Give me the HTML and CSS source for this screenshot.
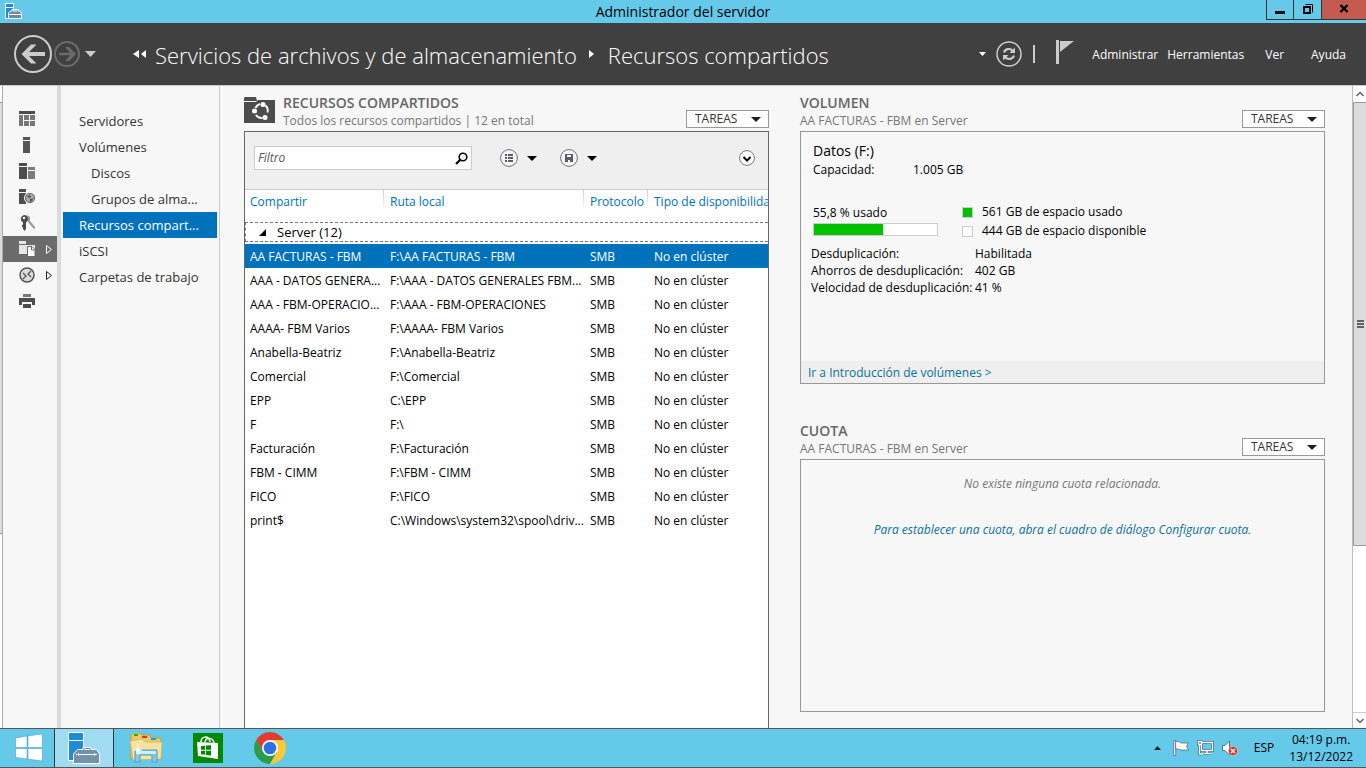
FILE: index.html
```html
<!DOCTYPE html>
<html lang="es">
<head>
<meta charset="utf-8">
<title>Administrador del servidor</title>
<link rel="stylesheet" href="styles.css">
</head>
<body>
<header class="titlebar">
  <svg class="app-icon" width="17" height="17" viewBox="0 0 17 17"><path d="M.5.5h8v15h-8z" fill="#1e8bd8" stroke="#fff"/><path d="M1 4.500h7" stroke="#fff"/><path d="M3.500 15.500V10l2-2H7V6.500h6V8h1.500l2 2v5.500z" fill="#6f8ba6" stroke="#fff"/><path d="M8 8h4M4 11.500h12" stroke="#fff"/></svg>
  <h1 class="titlebar-text">Administrador del servidor</h1>
  <div class="window-buttons">
    <button class="win-btn" aria-label="Minimizar"><svg width="10" height="12" viewBox="0 0 10 12"><path d="M0 8h10v3H0z"/></svg></button>
    <button class="win-btn" aria-label="Restaurar"><svg width="10" height="12" viewBox="0 0 10 12"><path d="M2.500 1.500h7v8" fill="none" stroke="#000"/><path d="M1 4h6v6H1z" fill="none" stroke="#000" stroke-width="2"/></svg></button>
    <button class="win-btn win-close" aria-label="Cerrar"><svg width="10" height="12" viewBox="0 0 10 12"><path d="M1.500 2l7 7M8.500 2l-7 7" stroke="#000" stroke-width="2.400"/></svg></button>
  </div>
</header>

<div class="topbar">
  <button class="plain" aria-label="Atrás"><svg width="38" height="38" viewBox="0 0 38 38" fill="none"><circle cx="19" cy="19" r="18" stroke="#ccc" stroke-width="2"/><path d="M10 19h21" stroke="#ccc" stroke-width="4"/><path d="M17 9.500h5.500L13 19l9.500 9.500H17L7.500 19z" fill="#ccc"/></svg></button>
  <button class="plain nav-forward" aria-label="Adelante"><svg width="26" height="26" viewBox="0 0 26 26" fill="none"><circle cx="13" cy="13" r="12" stroke="#6b6b6b" stroke-width="2"/><path d="M5 13h14" stroke="#6b6b6b" stroke-width="2.500"/><path d="M11 6h4l7 7-7 7h-4l6.500-7z" fill="#6b6b6b"/></svg></button>
  <button class="plain nav-history" aria-label="Historial"><svg width="11" height="6" viewBox="0 0 11 6"><path d="M0 0h11L5.500 6z" fill="#ccc"/></svg></button>
  <nav class="crumbs" aria-label="Ruta">
    <svg width="14" height="8" viewBox="0 0 14 8"><path d="M6 0v8L0 4zM13 0v8L8 4z" fill="#fff"/></svg>
    <a class="crumb" href="#archivos">Servicios de archivos y de almacenamiento</a>
    <svg class="crumb-arrow" width="5" height="8" viewBox="0 0 5 8"><path d="M0 0v8l5-4z" fill="#fff"/></svg>
    <a class="crumb" href="#recursos">Recursos compartidos</a>
  </nav>
  <div class="top-tools">
    <button class="plain" aria-label="Opciones"><svg width="7" height="4" viewBox="0 0 7 4"><path d="M0 0h7L3.500 4z" fill="#fff"/></svg></button>
    <button class="plain tool-refresh" aria-label="Actualizar"><svg width="26" height="26" viewBox="0 0 26 26" fill="none"><circle cx="13" cy="13" r="12" stroke="#ccc" stroke-width="1.500"/><path d="M8 11.500c1-3.500 6-5 9-1.500M18 14.500c-1 3.500-6 5-9 1.500" stroke="#ccc" stroke-width="2.200"/><path d="M19 6.500V12h-5.500zM7 19.500V14h5.500z" fill="#ccc"/></svg></button>
    <span class="tool-sep"></span>
    <button class="plain tool-flag" aria-label="Notificaciones"><svg width="18" height="24" viewBox="0 0 18 24"><path d="M0 0h3v24H0zM4 1h14L4 12z" fill="#ccc"/></svg></button>
    <button class="plain menu">Administrar</button>
    <button class="plain menu">Herramientas</button>
    <button class="plain menu menu-wide">Ver</button>
    <button class="plain menu">Ayuda</button>
  </div>
</div>

<div class="workspace">
  <div class="edge"><div class="edge-thumb"></div></div>
  <nav class="rail" aria-label="Roles">
    <a class="rail-item" href="#panel" aria-label="Panel"><svg width="16" height="16" viewBox="0 0 16 16"><path d="M0 0h16v3H0z" fill="#4d4d4d"/><path d="M0 4h4v11H0zM5 4h5v5H5zM11 4h5v5h-5zM5 10h5v5H5zM11 10h5v5h-5z" fill="#777"/></svg></a>
    <a class="rail-item" href="#local" aria-label="Servidor local"><svg width="16" height="16" viewBox="0 0 16 16"><path d="M4 0h7v3H4zM4 4h7v12H4z" fill="#555"/></svg></a>
    <a class="rail-item" href="#todos" aria-label="Todos los servidores"><svg width="16" height="16" viewBox="0 0 16 16"><path d="M0 0h8v3H0zM0 4h8v12H0z" fill="#4d4d4d"/><path d="M9 4h7v3H9zM9 8h7v8H9z" fill="#7c7c7c"/></svg></a>
    <a class="rail-item" href="#iis" aria-label="IIS"><svg width="16" height="16" viewBox="0 0 16 16"><path d="M0 0h7v3H0zM0 4h7v11H0z" fill="#4d4d4d"/><circle cx="11" cy="9" r="5.500" fill="#aaa" stroke="#f7f7f7"/><circle cx="11" cy="9" r="4.500" fill="none" stroke="#666"/><path d="M8 7l3-1 1 2-2 1zM11 10l3-1-1 3-2 1z" fill="#555"/></svg></a>
    <a class="rail-item" href="#claves" aria-label="Servicios de claves"><svg width="16" height="16" viewBox="0 0 16 16"><path d="M8 0l3 2v4l5 6v2l-2-1-5-6" fill="#999"/><path d="M5 0a4 4 0 0 1 2 7.500V14l-1.500 2L4 14v-2l-1 .5V10l1-.5v-2A4 4 0 0 1 5 0z" fill="#4d4d4d"/><circle cx="5" cy="3" r="1.200" fill="#f7f7f7"/></svg></a>
    <a class="rail-item rail-active" href="#archivos" aria-label="Servicios de archivos"><svg width="16" height="16" viewBox="0 0 16 16"><path d="M0 0h7v3H0zM0 4h16v9H0z" fill="#e6e6e6"/><path d="M8.500 5.500H13l3 3V15.500H8.500z" fill="#fff" stroke="#6b6b6b"/><path d="M12.500 5.500V9H16" fill="none" stroke="#6b6b6b"/></svg><svg class="rail-arrow" width="6" height="9" viewBox="0 0 6 9"><path d="M.5.5v8l5-4z" fill="none" stroke="#fff"/></svg></a>
    <a class="rail-item" href="#escritorio" aria-label="Servicios de Escritorio remoto"><svg width="16" height="16" viewBox="0 0 16 16" fill="none"><circle cx="8" cy="8" r="7" fill="#ddd" stroke="#555" stroke-width="1.500"/><path d="M4 6l3 3-3 3M12 4L9 7l3 3" stroke="#555" stroke-width="1.300"/></svg><svg class="rail-arrow" width="6" height="9" viewBox="0 0 6 9"><path d="M.5.5v8l5-4z" fill="none" stroke="#222"/></svg></a>
    <a class="rail-item" href="#impresion" aria-label="Servicios de impresión"><svg width="16" height="16" viewBox="0 0 16 16"><path d="M4 1h8v3H4z" fill="#777"/><path d="M0 5h16v7h-3V9H3v3H0zM4 11h8v4H4z" fill="#4d4d4d"/></svg></a>
  </nav>

  <nav class="sidenav" aria-label="Secciones">
    <a class="side-item" href="#servidores">Servidores</a>
    <a class="side-item" href="#volumenes">Volúmenes</a>
    <a class="side-item side-sub" href="#discos">Discos</a>
    <a class="side-item side-sub" href="#grupos">Grupos de alma...</a>
    <a class="side-item side-active" href="#recursos">Recursos compart...</a>
    <a class="side-item" href="#iscsi">iSCSI</a>
    <a class="side-item" href="#carpetas">Carpetas de trabajo</a>
  </nav>

  <main class="content">
    <section class="tile">
      <div class="tile-head">
        <svg class="tile-icon" width="31" height="26" viewBox="0 0 31 26"><path d="M1 0h11l1 4H0V1zM0 5h12l2-2h17v23H0z" fill="#4d4d4d"/><g fill="none" stroke="#fff" stroke-width="2"><path d="M11.500 11a7 7 0 0 1 4.500-4M21.500 8.500a7 7 0 0 1 2 7M18.500 21a7 7 0 0 1-6.500-3"/></g><g fill="#fff"><circle cx="19" cy="7.500" r="2.500"/><circle cx="10.500" cy="14" r="2.500"/><circle cx="21" cy="20.500" r="2.500"/></g></svg>
        <div class="tile-titles">
          <h2 class="tile-title">RECURSOS COMPARTIDOS</h2>
          <p class="tile-sub">Todos los recursos compartidos | 12 en total</p>
        </div>
        <button class="tasks">TAREAS <svg width="10" height="5" viewBox="0 0 10 5"><path d="M0 0h10L5 5z" fill="#1e1e1e"/></svg></button>
      </div>
      <div class="shares">
        <div class="toolbar">
          <div class="filter">
            <input class="filter-input" type="text" placeholder="Filtro" aria-label="Filtro">
            <button class="plain" aria-label="Buscar"><svg width="13" height="13" viewBox="0 0 13 13" fill="none" stroke="#000"><circle cx="8" cy="5" r="3.800" stroke-width="1.600"/><path d="M5.500 7.500L1 12" stroke-width="2.200"/></svg></button>
          </div>
          <button class="plain round-btn" aria-label="Criterios"><svg width="18" height="18" viewBox="0 0 18 18"><circle cx="9" cy="9" r="8.400" fill="#f7f7f7" stroke="#6e6e78"/><path d="M5 5h2v2H5zM8 5h5v2H8zM5 8h2v2H5zM8 8h5v2H8zM5 11h2v2H5zM8 11h5v2H8z" fill="#5b5b63"/></svg><svg width="10" height="5" viewBox="0 0 10 5"><path d="M0 0h10L5 5z"/></svg></button>
          <button class="plain round-btn" aria-label="Guardar consulta"><svg width="18" height="18" viewBox="0 0 18 18"><circle cx="9" cy="9" r="8.400" fill="#f7f7f7" stroke="#6e6e78"/><path d="M5 5h8v8H5z" fill="#5b5b63"/><path d="M7 6h4v2H7zM8 11h2v2H8z" fill="#f7f7f7"/></svg><svg width="10" height="5" viewBox="0 0 10 5"><path d="M0 0h10L5 5z"/></svg></button>
          <button class="plain expand" aria-label="Expandir"><svg width="16" height="16" viewBox="0 0 16 16" fill="none"><circle cx="8" cy="8" r="7.400" fill="#fff" stroke="#777"/><path d="M4.500 7L8 10.500 11.500 7" stroke="#000" stroke-width="2"/></svg></button>
        </div>
        <table class="grid">
          <colgroup><col class="c-name"><col class="c-path"><col class="c-proto"><col></colgroup>
          <thead><tr><th>Compartir</th><th>Ruta local</th><th>Protocolo</th><th>Tipo de disponibilidad</th></tr></thead>
          <tbody>
            <tr class="group"><td colspan="4"><div class="group-box"><svg width="8" height="7" viewBox="0 0 8 7"><path d="M7 0v7H0z"/></svg>Server (12)</div></td></tr>
            <tr class="selected"><td>AA FACTURAS - FBM</td><td>F:\AA FACTURAS - FBM</td><td>SMB</td><td>No en clúster</td></tr>
            <tr><td>AAA - DATOS GENERA...</td><td>F:\AAA - DATOS GENERALES FBM...</td><td>SMB</td><td>No en clúster</td></tr>
            <tr><td>AAA - FBM-OPERACIO...</td><td>F:\AAA - FBM-OPERACIONES</td><td>SMB</td><td>No en clúster</td></tr>
            <tr><td>AAAA- FBM Varios</td><td>F:\AAAA- FBM Varios</td><td>SMB</td><td>No en clúster</td></tr>
            <tr><td>Anabella-Beatriz</td><td>F:\Anabella-Beatriz</td><td>SMB</td><td>No en clúster</td></tr>
            <tr><td>Comercial</td><td>F:\Comercial</td><td>SMB</td><td>No en clúster</td></tr>
            <tr><td>EPP</td><td>C:\EPP</td><td>SMB</td><td>No en clúster</td></tr>
            <tr><td>F</td><td>F:\</td><td>SMB</td><td>No en clúster</td></tr>
            <tr><td>Facturación</td><td>F:\Facturación</td><td>SMB</td><td>No en clúster</td></tr>
            <tr><td>FBM - CIMM</td><td>F:\FBM - CIMM</td><td>SMB</td><td>No en clúster</td></tr>
            <tr><td>FICO</td><td>F:\FICO</td><td>SMB</td><td>No en clúster</td></tr>
            <tr><td>print$</td><td>C:\Windows\system32\spool\driv...</td><td>SMB</td><td>No en clúster</td></tr>
          </tbody>
        </table>
      </div>
    </section>

    <div class="side-tiles">
      <section class="tile">
        <div class="tile-head">
          <div class="tile-titles">
            <h2 class="tile-title">VOLUMEN</h2>
            <p class="tile-sub">AA FACTURAS - FBM en Server</p>
          </div>
          <button class="tasks">TAREAS <svg width="10" height="5" viewBox="0 0 10 5"><path d="M0 0h10L5 5z" fill="#1e1e1e"/></svg></button>
        </div>
        <div class="box">
          <div class="volume">
            <h3 class="volume-name">Datos (F:)</h3>
            <p class="capacity"><span>Capacidad:</span><span>1.005 GB</span></p>
            <div class="usage">
              <div>
                <p class="usage-text">55,8 % usado</p>
                <div class="bar" role="img" aria-label="55,8 % usado"><div class="bar-fill" style="width:56%"></div></div>
              </div>
              <ul class="legend">
                <li><i class="swatch swatch-used"></i>561 GB de espacio usado</li>
                <li><i class="swatch"></i>444 GB de espacio disponible</li>
              </ul>
            </div>
            <dl class="dedup">
              <dt>Desduplicación:</dt><dd>Habilitada</dd>
              <dt>Ahorros de desduplicación:</dt><dd>402 GB</dd>
              <dt>Velocidad de desduplicación:</dt><dd>41 %</dd>
            </dl>
          </div>
          <div class="box-foot"><a class="link" href="#volumenes">Ir a Introducción de volúmenes &gt;</a></div>
        </div>
      </section>
      <section class="tile">
        <div class="tile-head">
          <div class="tile-titles">
            <h2 class="tile-title">CUOTA</h2>
            <p class="tile-sub">AA FACTURAS - FBM en Server</p>
          </div>
          <button class="tasks">TAREAS <svg width="10" height="5" viewBox="0 0 10 5"><path d="M0 0h10L5 5z" fill="#1e1e1e"/></svg></button>
        </div>
        <div class="box quota">
          <p class="quota-empty">No existe ninguna cuota relacionada.</p>
          <a class="link" href="#cuota">Para establecer una cuota, abra el cuadro de diálogo Configurar cuota.</a>
        </div>
      </section>
    </div>
  </main>

  <div class="scrollbar">
    <button class="plain scroll-btn" aria-label="Subir"><svg width="8" height="6" viewBox="0 0 8 6"><path d="M.5 5L4 1.500 7.500 5" fill="none" stroke="#606060" stroke-width="1.500"/></svg></button>
    <div class="thumb"><i></i><i></i><i></i></div>
    <div class="track"></div>
    <button class="plain scroll-btn scroll-down" aria-label="Bajar"><svg width="8" height="6" viewBox="0 0 8 6"><path d="M.5 1L4 4.500 7.500 1" fill="none" stroke="#606060" stroke-width="1.500"/></svg></button>
  </div>
</div>

<footer class="taskbar">
  <button class="task" aria-label="Inicio"><svg width="28" height="28" viewBox="0 0 28 28" fill="#fff" stroke="#4a9fc4" stroke-width=".6"><path d="M.5 4L12 2v11.500H.5zM13 1.800L27.500 0v13.500H13zM.5 14.500H12V25L.5 23.500zM13 14.500h14.500V27L13 25.200z"/></svg></button>
  <button class="task task-active" aria-label="Administrador del servidor"><svg width="32" height="32" viewBox="0 0 32 32" stroke="#fff"><path d="M.5.500h15v28H.5z" fill="#1e8bd8"/><path d="M1 8.500h14"/><path d="M5.500 31.500V22l4-4.500H15V15.500h8v2h5.500l3 4.500v9.500z" fill="#7391ab"/><path d="M16 17.500h6M8 22.500h21M10.500 21v3M26.500 21v3"/></svg></button>
  <button class="task" aria-label="Explorador de archivos"><svg width="32" height="30" viewBox="0 0 32 30"><path d="M1 2l2-2h7l2 2h8l1 3h9l1 2v19H1z" fill="#ecc968" stroke="#c69b3c"/><path d="M4 1h4v2H4z" fill="#19b51d"/><path d="M12 3h5v2h-5z" fill="#d33a2c"/><path d="M21 5h5v2h-5z" fill="#2b96e5"/><path d="M0 8l12-2 3 3h17l-1 17-28 1z" fill="#f7e3a0" stroke="#d7ad50" stroke-width=".7"/><path d="M5 29V17h22v12h-5v-7H10v7z" fill="#83c6e8" stroke="#4f9fc7"/><path d="M6 18h20v3H6z" fill="#d1eefa"/><path d="M8 11l1 5 4 1-4 1-1 5-1-5-4-1 4-1z" fill="#fff"/></svg></button>
  <button class="task" aria-label="Tienda"><svg width="30" height="30" viewBox="0 0 30 30"><path d="M0 0h30v30H0z" fill="#008a00"/><path d="M4 9l21 1v16L5 23z" fill="#fff"/><path d="M8 9c0-6 8-7 9 0M12 9c1-5 8-5 9 1" fill="none" stroke="#fff" stroke-width="1.500"/><path d="M8 13l4-.3v4H8zM13 12.600l5-.4v4.600h-5zM8 17.700h4v4l-4-.5zM13 17.700h5v4.800l-5-.6z" fill="#008a00"/></svg></button>
  <button class="task" aria-label="Chrome"><svg width="32" height="32" viewBox="0 0 32 32"><path d="M2.150 8A16 16 0 0 1 29.850 8H16l-7 12z" fill="#e33b2e"/><path d="M2.150 8A16 16 0 0 0 16 32l7-12-7-4-7 4z" fill="#2a9d48"/><path d="M29.850 8A16 16 0 0 1 16 32l7-12-7-12z" fill="#fcc934"/><circle cx="16" cy="16" r="8" fill="#fff"/><circle cx="16" cy="16" r="6.300" fill="#2d6fe4"/></svg></button>
  <div class="tray">
    <button class="plain" aria-label="Mostrar iconos ocultos"><svg width="7" height="4" viewBox="0 0 7 4"><path d="M0 4h7L3.500 0z" fill="#222"/></svg></button>
    <svg class="tray-flag" width="16" height="16" viewBox="0 0 16 16"><path d="M.7.500h2v15h-2z" fill="#fff" stroke="#4a5a63" stroke-width=".7"/><path d="M2.700 1.500c4-1 4 2 6.500 1.500h6.300l-2 3 2 4H9c-3 0-3-1.500-6.300-1z" fill="#fff" stroke="#4a5a63" stroke-width=".7"/></svg>
    <svg width="17" height="16" viewBox="0 0 17 16" fill="none"><path d="M4.500 2.500h11v8h-11zM7 13.500h7M10 11v2M2.500 5v9H6M1.500 1.500h3v3h-3z" stroke="#34505d" stroke-width="2.600"/><path d="M4.500 2.500h11v8h-11zM7 13.500h7M10 11v2M2.500 5v9H6M1.500 1.500h3v3h-3z" stroke="#fff" stroke-width="1.400"/></svg>
    <svg width="16" height="16" viewBox="0 0 16 16"><path d="M.5 5.500h2.500L7.500 1v14L3 10.500H.5z" fill="#fff" stroke="#4a5a63" stroke-width=".8"/><circle cx="11" cy="11" r="4.700" fill="#d8352c" stroke="#fff" stroke-width=".5"/><path d="M9 9l4 4M13 9l-4 4" stroke="#fff" stroke-width="1.500"/></svg>
    <span class="lang">ESP</span>
    <div class="clock"><time>04:19 p.m.</time><time>13/12/2022</time></div>
  </div>
</footer>
</body>
</html>
```
FILE: styles.css
```css
* { box-sizing: border-box; }
body {
  margin: 0;
  height: 100vh;
  display: flex;
  flex-direction: column;
  overflow: hidden;
  background: #f7f7f7;
  color: #000;
  font: 12px/16px "Open Sans", "Noto Sans", sans-serif;
}
h1, h2, h3, p, ul, dl, dd { margin: 0; padding: 0; }
ul { list-style: none; }
a { text-decoration: none; color: inherit; }
svg { display: block; flex: none; }
button, input { font: inherit; color: inherit; }
.plain { background: none; border: 0; padding: 0; flex: none; }

.titlebar {
  flex: none;
  height: 23px;
  display: grid;
  grid-template-columns: 100px 1fr 100px;
  background: #65c9ea;
}
.app-icon { margin: 3px 0 0 5px; }
.titlebar-text { text-align: center; font-size: 14px; line-height: 23px; font-weight: 400; }
.window-buttons { display: flex; justify-content: flex-end; height: 20px; }
.win-btn {
  width: 28px;
  padding: 0 0 1px;
  display: grid;
  place-items: center;
  background: none;
  border: 1px solid #333;
  border-width: 0 0 1px 1px;
}
.win-close { width: 46px; background: #c35b50; }

.topbar {
  flex: none;
  height: 62px;
  display: flex;
  align-items: center;
  padding-left: 14px;
  background: #404040;
  color: #fff;
}
.nav-forward { margin-left: 2px; }
.nav-history { margin-left: 5px; }
.crumbs { display: flex; align-items: center; margin-left: 37px; white-space: nowrap; }
.crumb { font-size: 22px; line-height: 32px; font-weight: 300; margin-left: 8px; padding-top: 2px; }
.crumb-arrow { margin: 0 6px 0 12px; }
.top-tools { margin-left: auto; display: flex; align-items: center; padding-right: 20px; }
.tool-refresh { margin-left: 10px; }
.tool-sep { width: 2px; height: 18px; margin-left: 11px; background: #ccc; }
.tool-flag { margin: 0 18px 4px 21px; }
.menu { padding-top: 2px; }
.menu + .menu { margin-left: 9px; }
.menu + .menu-wide { margin: 0 18px 0 21px; }

.workspace { flex: 1; min-height: 0; display: flex; border-top: 1px solid #c8c8c8; }
.edge { width: 3px; padding-top: 16px; background: #fff; border-right: 1px solid #aaa; }
.edge-thumb { height: 69%; background: #dcdcdc; border: 1px solid #999; border-width: 1px 0; }
.rail { width: 58px; padding-top: 20px; border-right: 4px solid #dadada; }
.rail-item { display: flex; align-items: center; height: 26px; padding-left: 16px; }
.rail-active { background: #6b6b6b; }
.rail-arrow { margin-left: 11px; }

.sidenav { width: 159px; padding: 22px 2px 0; border-right: 1px solid #ccc; color: #333; }
.side-item { display: block; height: 26px; padding-left: 16px; font-size: 13px; line-height: 27px; white-space: nowrap; }
.side-sub { padding-left: 28px; }
.side-active { background: #0072bc; color: #fff; }

.content {
  flex: 1;
  min-width: 0;
  display: grid;
  grid-template-columns: minmax(0, 1fr) minmax(0, 1fr);
  gap: 31px;
  padding: 9px 27px 0 24px;
}
.tile { display: flex; flex-direction: column; min-height: 0; }
.tile-head { display: flex; height: 36px; flex: none; }
.tile-icon { margin: 2px 8px 0 0; }
.tile-title { font-size: 14px; line-height: 16px; font-weight: 600; color: #666; }
.tile-sub { font-size: 12px; line-height: 16px; margin-top: 2px; color: #767676; }
.tasks {
  align-self: flex-end;
  margin: 0 0 3px auto;
  width: 83px;
  height: 18px;
  padding: 0 7px 0 8px;
  display: flex;
  align-items: center;
  justify-content: space-between;
  background: #fff;
  border: 1px solid #999;
  color: #333;
}

.shares { flex: 1; min-height: 0; overflow: hidden; background: #fff; border: 1px solid #666; border-bottom: 0; }
.toolbar {
  height: 58px;
  display: flex;
  align-items: center;
  padding: 0 13px 5px 9px;
  background: #efefef;
  border-bottom: 1px solid #ccc;
}
.filter { width: 218px; height: 24px; display: flex; align-items: center; padding: 0 3px; background: #fff; border: 1px solid #ccc; }
.filter-input { flex: 1; min-width: 0; border: 0; padding: 0; outline: 0; background: none; }
.filter-input::placeholder { color: #555; font-style: italic; opacity: 1; }
.round-btn { display: flex; align-items: center; gap: 9px; margin-left: 28px; }
.round-btn + .round-btn { margin-left: 23px; }
.expand { margin-left: auto; }

.grid { width: 100%; table-layout: fixed; border-collapse: collapse; }
.c-name { width: 139px; }
.c-path { width: 200px; }
.c-proto { width: 64px; }
.grid th, .grid td { padding: 0 0 0 6px; text-align: left; font-weight: 400; white-space: nowrap; overflow: hidden; }
.grid th:first-child, .grid td:first-child { padding-left: 5px; }
.grid th { height: 32px; color: #0072bc; vertical-align: top; padding-top: 4px; }
.grid th:not(:last-child) { background: linear-gradient(#ccc, #fff) right top / 1px 20px no-repeat; }
.grid td { height: 24px; padding-top: 2px; }
.grid .group td { padding: 0 0 2px; height: 22px; }
.group-box { display: flex; align-items: center; gap: 10px; height: 20px; padding-left: 13px; border: 1px dashed #777; border-right: 0; font-size: 13px; }
.grid .selected { background: #0072bc; color: #fff; }

.side-tiles { display: flex; flex-direction: column; gap: 39px; }
.box { height: 253px; display: flex; flex-direction: column; border: 1px solid #999; }
.volume { flex: 1; padding: 10px 12px 0; }
.volume-name { font-size: 14px; line-height: 18px; font-weight: 400; }
.capacity { display: grid; grid-template-columns: 100px 1fr; margin-top: 2px; }
.usage { display: grid; grid-template-columns: 125px 1fr; gap: 24px; margin-top: 26px; }
.usage-text { margin-top: 1px; }
.bar { height: 13px; margin-top: 2px; border: 1px solid #ccc; background: #fff; }
.bar-fill { height: 100%; background: #00c000; }
.legend { display: grid; gap: 3px; align-content: start; }
.legend li { display: flex; align-items: center; }
.swatch { width: 11px; height: 11px; margin-right: 9px; border: 1px solid #ccc; background: #fff; }
.swatch-used { background: #00c000; }
.dedup { display: grid; grid-template-columns: 164px 1fr; row-gap: 1px; margin: 7px 0 0 -2px; white-space: nowrap; }
.box-foot { height: 22px; padding: 4px 7px 0; background: #efefef; }
.link { color: #0b7297; }
.quota { align-items: center; padding-top: 16px; gap: 30px; font-style: italic; }
.quota-empty { color: #767676; }

.scrollbar { width: 14px; display: flex; flex-direction: column; background: #fff; border-left: 1px solid #bbb; }
.scroll-btn { height: 16px; display: grid; place-items: center; }
.scroll-down { border-top: 1px solid #ccc; }
.thumb { flex: 443; display: flex; flex-direction: column; align-items: center; justify-content: center; gap: 1px; background: #dcdcdc; border: 1px solid #999; border-right: 0; }
.thumb i { width: 7px; height: 2px; background: #606060; }
.track { flex: 167; }

.taskbar {
  flex: none;
  height: 40px;
  display: flex;
  padding-left: 3px;
  background: #65c9ea;
  border: 1px solid #555;
  border-width: 1px 0;
}
.task { width: 60px; margin-right: 2px; padding: 0; display: grid; place-items: center; background: none; border: 0; }
.task:first-child { width: 51px; margin: 0; }
.task-active { background: #a0ddf2; border: 1px solid #333; border-width: 0 1px; }
.tray { margin-left: auto; display: flex; align-items: center; padding-right: 13px; gap: 8px; }
.tray-flag { margin-left: 4px; }
.lang { margin: 0 7px 0 8px; }
.clock { display: flex; flex-direction: column; align-items: center; line-height: 17px; }
```
